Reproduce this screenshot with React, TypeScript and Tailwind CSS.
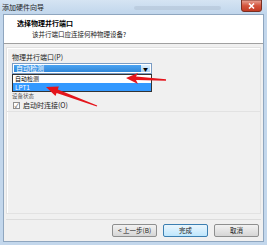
const font = { fontFamily: '"Noto Sans CJK SC", "Noto Sans", sans-serif' };

const Arrows = () => (
  <svg className="absolute inset-0 pointer-events-none z-20" width="267" height="245" viewBox="0 0 267 245">
    {/* arrow pointing at the first list item */}
    <polygon points="126,78 138,73 136,76.5 166,79.2 166,80.8 136,80 138,84" fill="#e4141b" />
    {/* arrow pointing at LPT1 */}
    <polygon points="46,87 58.9,86.5 57.8,89.5 97.2,105.5 96.8,106.5 56.6,92.9 55.5,95.9" fill="#e4141b" />
  </svg>
);

const Button = ({ label, primary }: { label: string; primary?: boolean }) => (
  <div
    className={`h-[13px] w-[45px] flex items-center justify-center text-[6.5px] text-[#222] rounded-[2px] border ${
      primary ? 'border-[#3c7fb1] bg-linear-to-b from-[#eaf6fd] to-[#bee6fd]' : 'border-[#8e8f8f] bg-linear-to-b from-[#f2f2f2] to-[#d6d6d6]'
    }`}
  >
    {label}
  </div>
);

export default function App() {
  return (
    <div className="relative w-[267px] h-[245px] overflow-hidden bg-[#c3d7ec] flex flex-col" style={font}>
      {/* title bar */}
      <div className="h-[14px] shrink-0 flex items-start pl-[2px] pr-[5px] bg-linear-to-b from-[#d5e4f3] to-[#c1d6ec]">
        <span className="text-[7px] leading-none text-[#1e1e1e] mt-[4px]">添加硬件向导</span>
        <div className="flex-1 h-[4px] mt-[6px] ml-[90px] mr-[20px] rounded-full bg-[#b3c3d6] opacity-60" />
        <svg className="shrink-0" width="21" height="12" viewBox="0 0 21 12">
          <defs>
            <linearGradient id="cls" x1="0" y1="0" x2="0" y2="1">
              <stop offset="0" stopColor="#e9a99b" />
              <stop offset="0.5" stopColor="#d4543c" />
              <stop offset="1" stopColor="#c23a22" />
            </linearGradient>
          </defs>
          <path d="M0.5 0 V9 Q0.5 11.5 3 11.5 H18 Q20.5 11.5 20.5 9 V0 Z" fill="url(#cls)" stroke="#7a2f22" />
          <path d="M8 3.5 L13 8.5 M13 3.5 L8 8.5" stroke="#fff" strokeWidth="1.6" />
        </svg>
      </div>

      <div className="flex-1 mx-[3px] mb-[3px] flex flex-col border border-[#8fa6bf]">
        {/* header */}
        <div className="h-[29px] bg-white border-b border-[#a0a0a0] flex flex-col justify-center pl-[13px] gap-[4px]">
          <span className="text-[7px] leading-none font-bold text-black">选择物理并行端口</span>
          <span className="text-[6.5px] leading-none text-[#222] pl-[15px]">该并行端口应连接何种物理设备?</span>
        </div>

        {/* body */}
        <div className="flex-1 bg-[#f0f0f0] flex flex-col px-[2px] pt-[3px]">
          <div className="flex-1 flex flex-col border border-[#e2e2e2] shadow-[inset_1px_1px_0_#fff]">
            <div className="h-[64px] flex flex-col pl-[5px] pr-[108px] pt-[4px] border-b border-[#e2e2e2]">
              <span className="text-[7px] leading-none text-[#222] h-[10px] flex items-center">物理并行端口(P)</span>
              <div className="relative mt-[1px] h-[11px] border border-[#7a9cc4] bg-white flex items-center p-[1px]">
                <div className="flex-1 h-full bg-linear-to-b from-[#4aa3f2] to-[#2f86d8] flex items-center pl-[2px]">
                  <span className="text-[7px] leading-none text-white">自动检测</span>
                </div>
                <div className="w-[9px] h-full bg-linear-to-b from-[#dceefc] to-[#a9d3f5] flex items-center justify-center">
                  <span className="text-[5px] leading-none text-black">▼</span>
                </div>
                {/* open list */}
                <div className="absolute left-[-1px] right-[-1px] top-[10px] border border-[#333] bg-white flex flex-col z-10">
                  <div className="h-[8px] overflow-hidden flex items-center pl-[2px] text-[6px] leading-[6px] text-black">自动检测</div>
                  <div className="h-[8px] overflow-hidden flex items-center pl-[2px] text-[6.5px] leading-[6px] text-white bg-[#3399ff]">LPT1</div>
                </div>
              </div>
              <span className="text-[5.5px] leading-none text-[#555] h-[5px] flex items-end mt-[20px]">设备状态</span>
              <div className="flex items-center gap-[3px] mt-[3px] pl-[1px]">
                <div className="w-[7px] h-[7px] border border-[#8f8f8f] bg-white flex items-center justify-center">
                  <span className="text-[6px] leading-none text-[#333]">✓</span>
                </div>
                <span className="text-[7px] leading-none text-[#222]">启动时连接(O)</span>
              </div>
            </div>
            <div className="flex-1" />
          </div>
          {/* footer */}
          <div className="h-[22px] mt-[5px] border-t border-[#dcdcdc] flex items-center justify-end gap-[6px] pr-[2px]">
            <Button label="< 上一步(B)" />
            <Button label="完成" primary />
            <Button label="取消" />
          </div>
        </div>
      </div>
      <Arrows />
    </div>
  );
}
